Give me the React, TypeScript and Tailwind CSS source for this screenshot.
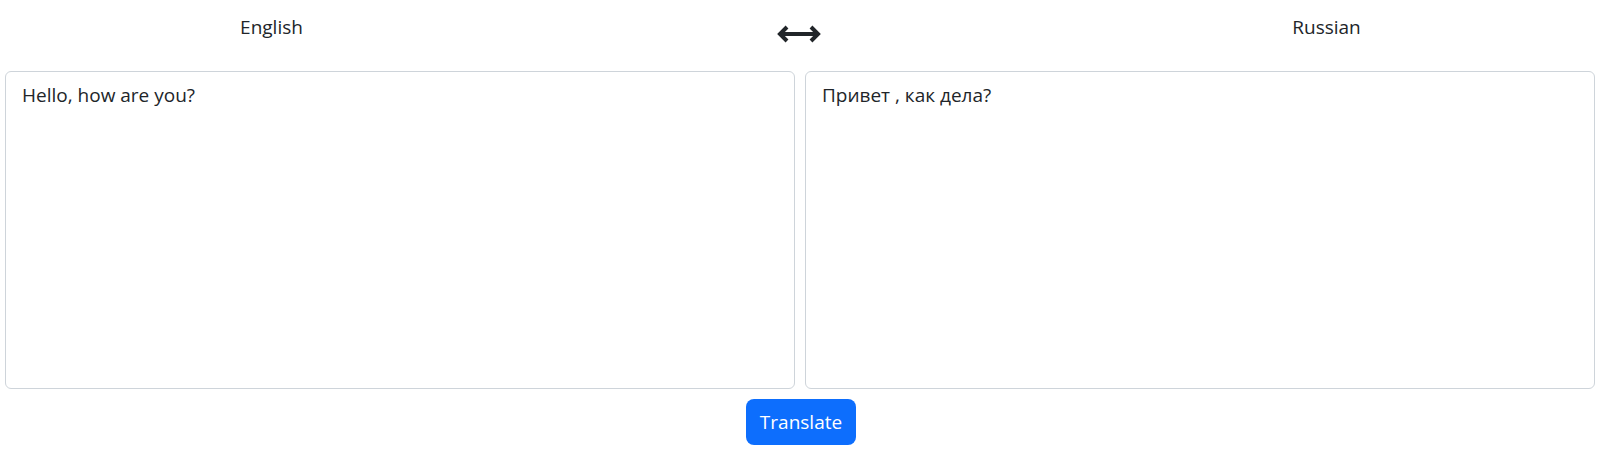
import React from "react";

export default function App() {
  return (
    <div className="w-full bg-white text-[#212529] font-['Segoe_UI','Open_Sans',sans-serif]">
      <div className="grid grid-cols-3 h-[71px]">
        <div className="pl-[9px] text-center text-[19px] leading-[27px] pt-[14px]">English</div>
        <div className="flex justify-center pt-[24px]">
          <svg width="44" height="20" viewBox="0 0 44 20" className="ml-[-4px]">
            <path
              d="M3 10 H41 M10 3 L3 10 L10 17 M34 3 L41 10 L34 17"
              fill="none"
              stroke="#212529"
              strokeWidth="4"
              strokeLinejoin="miter"
            />
          </svg>
        </div>
        <div className="pr-[17px] text-center text-[19px] leading-[27px] pt-[14px]">Russian</div>
      </div>
      <div className="flex gap-[10px] pl-[5px] pr-[7px]">
        <textarea
          readOnly
          defaultValue="Hello, how are you?"
          className="flex-1 h-[318px] resize-none border border-[#ced4da] rounded-[6px] px-4 py-2 text-[19px] leading-[30px] outline-none text-[#212529]"
        />
        <textarea
          readOnly
          defaultValue="Привет , как дела?"
          className="flex-1 h-[318px] resize-none border border-[#ced4da] rounded-[6px] px-4 py-2 text-[19px] leading-[30px] outline-none text-[#212529]"
        />
      </div>
      <div className="flex justify-center pt-[10px]">
        <button className="bg-[#0d6efd] text-white text-[19px] leading-[30px] py-2 rounded-[8px] w-[110px]">
          Translate
        </button>
      </div>
    </div>
  );
}
